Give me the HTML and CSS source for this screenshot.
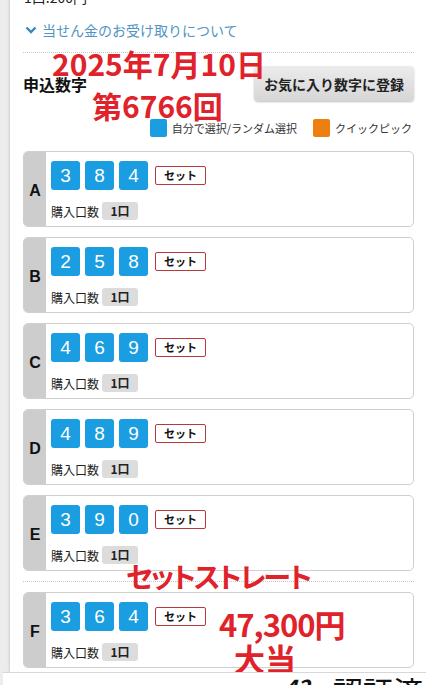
FILE: index.html
```html
<!DOCTYPE html>
<html lang="ja">
<head>
    <meta charset="UTF-8">
    <meta name="viewport" content="width=device-width, initial-scale=1.0">
    <title>申込数字</title>
    <link rel="stylesheet" href="styles.css">
</head>
<body>
    <div class="page">
        <div class="price">1口:200円</div>
        <a class="guide-link" href="#">
            <svg class="chevron" width="12" height="8" viewBox="0 0 12 8"><path d="M1.5 1.5 L6 6 L10.5 1.5" fill="none" stroke="#3b86b8" stroke-width="2.4"/></svg>
            当せん金のお受け取りについて
        </a>

        <div class="head-row">
            <h2 class="title">申込数字</h2>
            <button class="fav-btn">お気に入り数字に登録</button>
        </div>

        <div class="legend">
            <span class="legend-item"><i class="swatch blue"></i>自分で選択/ランダム選択</span>
            <span class="legend-item"><i class="swatch orange"></i>クイックピック</span>
        </div>

        <div class="cards">
            <div class="card">
                <div class="card-label">A</div>
                <div class="card-body">
                    <div class="num-row">
                        <span class="num">3</span><span class="num">8</span><span class="num">4</span>
                        <span class="type-tag">セット</span>
                    </div>
                    <div class="qty-row">購入口数 <span class="qty">1口</span></div>
                </div>
            </div>
            <div class="card">
                <div class="card-label">B</div>
                <div class="card-body">
                    <div class="num-row">
                        <span class="num">2</span><span class="num">5</span><span class="num">8</span>
                        <span class="type-tag">セット</span>
                    </div>
                    <div class="qty-row">購入口数 <span class="qty">1口</span></div>
                </div>
            </div>
            <div class="card">
                <div class="card-label">C</div>
                <div class="card-body">
                    <div class="num-row">
                        <span class="num">4</span><span class="num">6</span><span class="num">9</span>
                        <span class="type-tag">セット</span>
                    </div>
                    <div class="qty-row">購入口数 <span class="qty">1口</span></div>
                </div>
            </div>
            <div class="card">
                <div class="card-label">D</div>
                <div class="card-body">
                    <div class="num-row">
                        <span class="num">4</span><span class="num">8</span><span class="num">9</span>
                        <span class="type-tag">セット</span>
                    </div>
                    <div class="qty-row">購入口数 <span class="qty">1口</span></div>
                </div>
            </div>
            <div class="card">
                <div class="card-label">E</div>
                <div class="card-body">
                    <div class="num-row">
                        <span class="num">3</span><span class="num">9</span><span class="num">0</span>
                        <span class="type-tag">セット</span>
                    </div>
                    <div class="qty-row">購入口数 <span class="qty">1口</span></div>
                </div>
            </div>
        </div>

        <div class="cards cards-split">
            <div class="card">
                <div class="card-label">F</div>
                <div class="card-body">
                    <div class="num-row">
                        <span class="num">3</span><span class="num">6</span><span class="num">4</span>
                        <span class="type-tag">セット</span>
                    </div>
                    <div class="qty-row">購入口数 <span class="qty">1口</span></div>
                </div>
            </div>
        </div>
    </div>

    <!-- red notes written over the screenshot -->
    <div class="note note-date">2025年7月10日</div>
    <div class="note note-round">第6766回</div>
    <div class="note note-kind">セットストレート</div>
    <div class="note note-prize">47,300円</div>
    <div class="note note-win">大当</div>

    <div class="bottom-bar">
        <span class="bar-mark">42</span>
        <span class="bar-text">認証済み</span>
    </div>
</body>
</html>
```

FILE: styles.css
```css
body {
    margin: 0;
    position: relative;
    height: 685px;
    overflow: hidden;
    background-color: #ececec;
    font-family: "Noto Sans CJK JP", "Noto Sans", sans-serif;
    color: #222;
}
.page {
    margin-left: 10px;
    min-height: 685px;
    padding: 0 12px 0 13px;
    background-color: #fff;
    box-shadow: -1px 0 2px rgba(0, 0, 0, 0.12), inset 0 8px 6px -6px rgba(0, 0, 0, 0.25);
}
.price {
    margin-top: -13px;
    padding-left: 1px;
    font-size: 14px;
    line-height: 20px;
}
.guide-link {
    display: flex;
    align-items: center;
    gap: 5px;
    height: 20px;
    margin-top: 13px;
    padding-left: 2px;
    font-size: 14px;
    color: #4f95c2;
    text-decoration: none;
}
.head-row {
    display: flex;
    justify-content: space-between;
    align-items: center;
    margin-top: 12px;
    padding-top: 13px;
    border-top: 1px dotted #c8c8c8;
}
.title {
    margin: 0;
    font-size: 16px;
    font-weight: bold;
    color: #111;
}
.fav-btn {
    width: 160px;
    height: 35px;
    border: none;
    border-radius: 4px;
    background: linear-gradient(#ececec, #d6d6d6);
    box-shadow: 0 1px 2px rgba(0, 0, 0, 0.25);
    font-family: inherit;
    font-size: 14px;
    font-weight: bold;
    color: #222;
}
.legend {
    display: flex;
    justify-content: flex-end;
    gap: 16px;
    margin-top: 18px;
    padding-right: 2px;
    font-size: 11px;
    color: #333;
}
.legend-item {
    display: flex;
    align-items: center;
    gap: 5px;
    line-height: 18px;
}
.swatch {
    display: inline-block;
    width: 17px;
    height: 18px;
    border-radius: 2px;
}
.swatch.blue {
    background-color: #1b9de2;
}
.swatch.orange {
    background-color: #ec7f10;
}
.cards {
    display: flex;
    flex-direction: column;
    gap: 10px;
    margin-top: 14px;
}
.cards-split {
    margin-top: 10px;
    padding-top: 10px;
    border-top: 1px dotted #c8c8c8;
}
.card {
    display: flex;
    height: 76px;
    box-sizing: border-box;
    border: 1px solid #cfcfcf;
    border-radius: 5px;
    overflow: hidden;
    background-color: #fff;
}
.card-label {
    display: flex;
    align-items: center;
    justify-content: center;
    width: 22px;
    padding-top: 3px;
    background-color: #cdcdcd;
    font-family: "Liberation Sans", sans-serif;
    font-size: 16px;
    font-weight: bold;
    color: #111;
}
.card-body {
    padding: 9px 0 0 5px;
}
.num-row {
    display: flex;
    align-items: center;
    gap: 5px;
}
.num {
    width: 29px;
    height: 29px;
    border-radius: 3px;
    background-color: #1b9de2;
    color: #fff;
    font-family: "Liberation Sans", sans-serif;
    font-size: 19px;
    line-height: 29px;
    text-align: center;
}
.type-tag {
    width: 51px;
    height: 19px;
    box-sizing: border-box;
    margin-left: 2px;
    border: 1px solid #b8393c;
    border-radius: 2px;
    font-size: 11px;
    font-weight: bold;
    line-height: 17px;
    text-align: center;
    color: #111;
}
.qty-row {
    display: flex;
    align-items: center;
    gap: 3px;
    margin-top: 12px;
    font-size: 12px;
    color: #222;
}
.qty {
    width: 36px;
    height: 18px;
    border-radius: 3px;
    background-color: #dcdcdc;
    font-size: 12px;
    font-weight: bold;
    line-height: 18px;
    text-align: center;
}
.note {
    position: absolute;
    color: #e0222b;
    font-weight: bold;
    font-size: 30px;
    line-height: 1;
    white-space: nowrap;
}
.note-date {
    left: 52px;
    top: 48px;
}
.note-round {
    left: 92px;
    top: 90px;
}
.note-kind {
    left: 126px;
    top: 562px;
    font-size: 28px;
    letter-spacing: -2px;
    font-feature-settings: "palt";
}
.note-prize {
    left: 219px;
    top: 608px;
    font-size: 31px;
    letter-spacing: -1px;
}
.note-win {
    left: 234px;
    top: 642px;
    font-size: 31px;
}
.bottom-bar {
    position: absolute;
    left: 3px;
    right: 0;
    bottom: 0;
    height: 12px;
    overflow: hidden;
    background-color: #fff;
    border-top: 1px solid #d8d8d8;
}
.bar-mark {
    position: absolute;
    left: 281px;
    top: 2px;
    font-size: 22px;
    font-weight: bold;
    font-style: italic;
    line-height: 1;
    color: #111;
}
.bar-text {
    position: absolute;
    left: 330px;
    top: 2px;
    font-size: 30px;
    line-height: 1;
    color: #111;
}
```
